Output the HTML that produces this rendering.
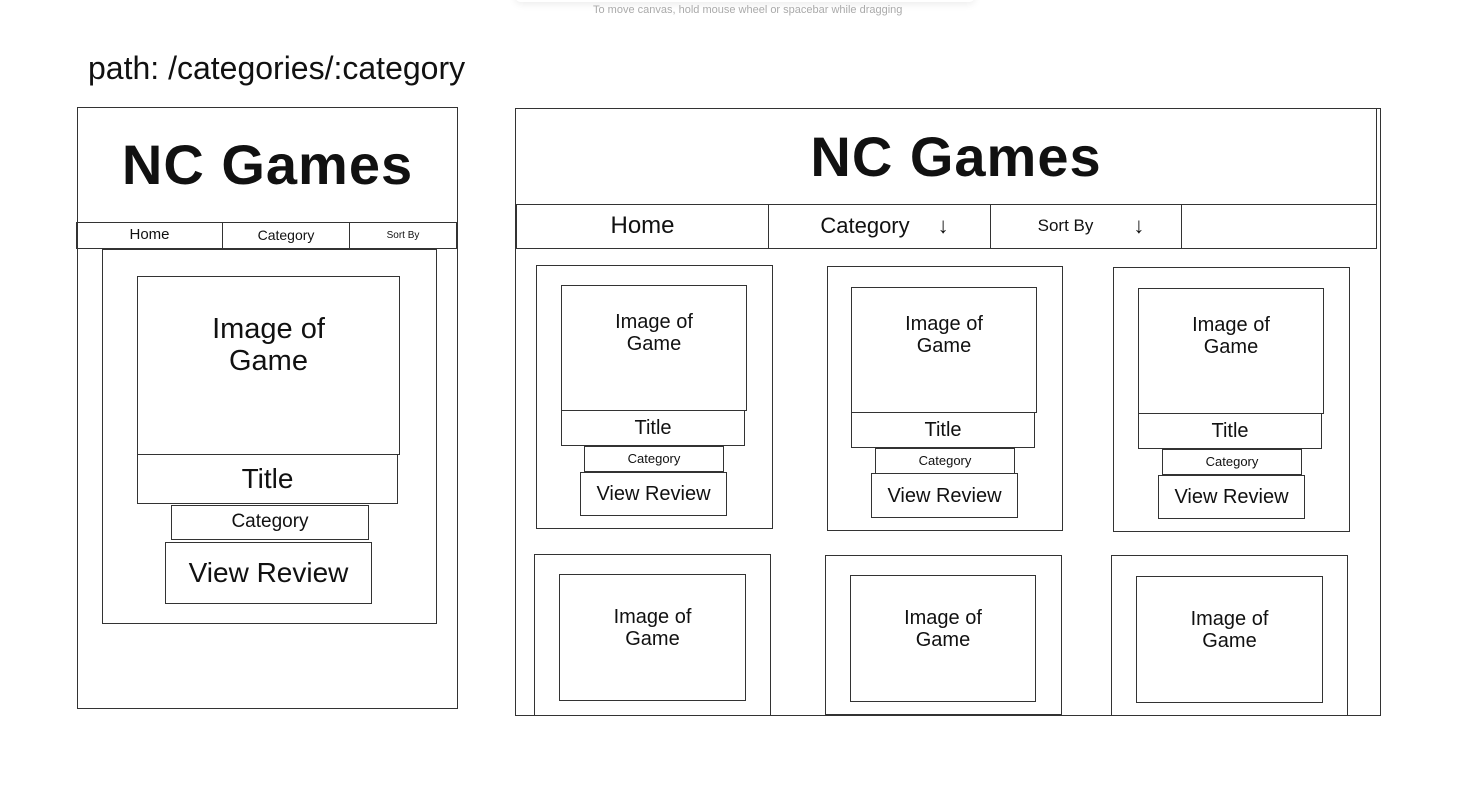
<!DOCTYPE html>
<html><head><meta charset="utf-8"><style>
body{margin:0;width:1461px;height:786px;background:#fff;position:relative;overflow:hidden;font-family:"Liberation Sans",sans-serif;color:#111}
.b{position:absolute;border:1.5px solid #333;box-sizing:border-box;display:flex;align-items:center;justify-content:center;text-align:center;line-height:1.1}
.t{position:absolute;white-space:nowrap}
</style></head><body>
<div style="position:absolute;left:515px;top:-10px;width:460px;height:12px;box-shadow:0 2px 8px rgba(0,0,0,.08);border-radius:6px"></div>
<div class="t" style="left:593px;top:4px;font-size:11px;color:#aaa">To move canvas, hold mouse wheel or spacebar while dragging</div>
<div class="t" style="left:88px;top:50px;font-size:32px">path: /categories/:category</div>

<div class="b" style="left:77px;top:107px;width:381px;height:602px"></div>
<div class="b" style="left:77px;top:107px;width:381px;height:116px;font-size:56px;font-weight:bold;letter-spacing:1px">NC Games</div>
<div class="b" style="left:76px;top:222px;width:147px;height:27px;font-size:15px">Home</div>
<div class="b" style="left:222px;top:222px;width:128px;height:27px;font-size:14px">Category</div>
<div class="b" style="left:349px;top:222px;width:108px;height:27px;font-size:10px">Sort By</div>
<div class="b" style="left:102px;top:249px;width:335px;height:375px"></div>
<div class="b" style="left:137px;top:276px;width:263px;height:179px;font-size:29px;padding-bottom:40px">Image of<br>Game</div>
<div class="b" style="left:137px;top:454px;width:261px;height:50px;font-size:28px">Title</div>
<div class="b" style="left:171px;top:505px;width:198px;height:35px;font-size:19px">Category</div>
<div class="b" style="left:165px;top:542px;width:207px;height:62px;font-size:28px">View Review</div>

<div class="b" style="left:515px;top:108px;width:866px;height:608px"></div>
<div class="b" style="left:515px;top:108px;width:862px;height:97px;font-size:56px;font-weight:bold;padding-left:20px;letter-spacing:1px">NC Games</div>
<div class="b" style="left:516px;top:204px;width:253px;height:45px;font-size:24px">Home</div>
<div class="b" style="left:768px;top:204px;width:223px;height:45px;font-size:22px"><span style="margin-left:10px">Category</span><span style="margin-left:28px;font-size:22px">↓</span></div>
<div class="b" style="left:990px;top:204px;width:192px;height:45px;font-size:17px"><span style="margin-left:10px">Sort By</span><span style="margin-left:40px;font-size:22px">↓</span></div>
<div class="b" style="left:1181px;top:204px;width:196px;height:45px"></div>

<div class="b" style="left:536px;top:265px;width:237px;height:264px"></div>
<div class="b" style="left:561px;top:285px;width:186px;height:126px;font-size:20px;padding-bottom:30px">Image of<br>Game</div>
<div class="b" style="left:561px;top:410px;width:184px;height:36px;font-size:20px">Title</div>
<div class="b" style="left:584px;top:446px;width:140px;height:26px;font-size:13px">Category</div>
<div class="b" style="left:580px;top:472px;width:147px;height:44px;font-size:20px">View Review</div>

<div class="b" style="left:827px;top:266px;width:236px;height:265px"></div>
<div class="b" style="left:851px;top:287px;width:186px;height:126px;font-size:20px;padding-bottom:30px">Image of<br>Game</div>
<div class="b" style="left:851px;top:412px;width:184px;height:36px;font-size:20px">Title</div>
<div class="b" style="left:875px;top:448px;width:140px;height:26px;font-size:13px">Category</div>
<div class="b" style="left:871px;top:473px;width:147px;height:45px;font-size:20px">View Review</div>

<div class="b" style="left:1113px;top:267px;width:237px;height:265px"></div>
<div class="b" style="left:1138px;top:288px;width:186px;height:126px;font-size:20px;padding-bottom:30px">Image of<br>Game</div>
<div class="b" style="left:1138px;top:413px;width:184px;height:36px;font-size:20px">Title</div>
<div class="b" style="left:1162px;top:449px;width:140px;height:26px;font-size:13px">Category</div>
<div class="b" style="left:1158px;top:475px;width:147px;height:44px;font-size:20px">View Review</div>

<div class="b" style="left:534px;top:554px;width:237px;height:162px"></div>
<div class="b" style="left:559px;top:574px;width:187px;height:127px;font-size:20px;padding-bottom:20px">Image of<br>Game</div>
<div class="b" style="left:825px;top:555px;width:237px;height:160px"></div>
<div class="b" style="left:850px;top:575px;width:186px;height:127px;font-size:20px;padding-bottom:20px">Image of<br>Game</div>
<div class="b" style="left:1111px;top:555px;width:237px;height:161px"></div>
<div class="b" style="left:1136px;top:576px;width:187px;height:127px;font-size:20px;padding-bottom:20px">Image of<br>Game</div>
</body></html>
